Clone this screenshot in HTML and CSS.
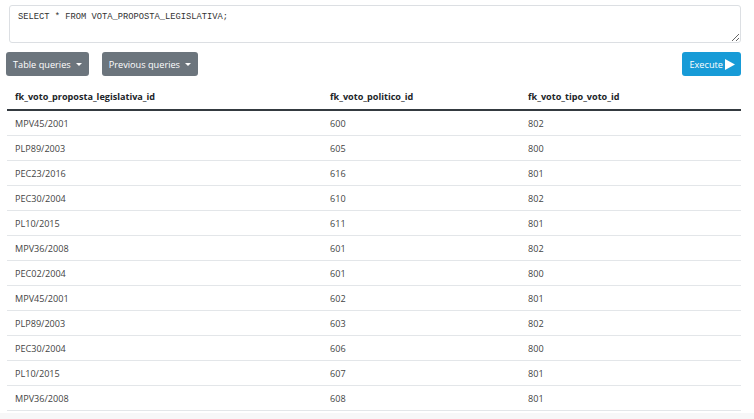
FILE: index.html
```html
<!DOCTYPE html>
<html>
<head>
<meta charset="utf-8">
<link rel="stylesheet" href="styles.css">
</head>
<body>
<div class="page">
  <textarea class="query">SELECT * FROM VOTA_PROPOSTA_LEGISLATIVA;</textarea>
  <div class="toolbar">
    <div class="left-btns">
      <button class="btn btn-gray">Table queries <span class="caret"></span></button>
      <button class="btn btn-gray">Previous queries <span class="caret"></span></button>
    </div>
    <button class="btn btn-blue">Execute <svg class="play" width="10" height="11" viewBox="0 0 10 11"><path d="M0 0 L10 5.5 L0 11 Z" fill="#fff"/></svg></button>
  </div>
  <table class="results">
    <thead>
      <tr><th class="c1">fk_voto_proposta_legislativa_id</th><th class="c2">fk_voto_politico_id</th><th class="c3">fk_voto_tipo_voto_id</th></tr>
    </thead>
    <tbody>
      <tr><td>MPV45/2001</td><td>600</td><td>802</td></tr>
      <tr><td>PLP89/2003</td><td>605</td><td>800</td></tr>
      <tr><td>PEC23/2016</td><td>616</td><td>801</td></tr>
      <tr><td>PEC30/2004</td><td>610</td><td>802</td></tr>
      <tr><td>PL10/2015</td><td>611</td><td>801</td></tr>
      <tr><td>MPV36/2008</td><td>601</td><td>802</td></tr>
      <tr><td>PEC02/2004</td><td>601</td><td>800</td></tr>
      <tr><td>MPV45/2001</td><td>602</td><td>801</td></tr>
      <tr><td>PLP89/2003</td><td>603</td><td>802</td></tr>
      <tr><td>PEC30/2004</td><td>606</td><td>800</td></tr>
      <tr><td>PL10/2015</td><td>607</td><td>801</td></tr>
      <tr><td>MPV36/2008</td><td>608</td><td>801</td></tr>
    </tbody>
  </table>
</div>
<div class="footer-strip"></div>
</body>
</html>
```
FILE: styles.css
```css
html, body {
  margin: 0;
  padding: 0;
  background: #fff;
  font-family: "Open Sans", "Noto Sans", sans-serif;
  color: #212529;
}
.page {
  padding: 5px 13px 0 6px;
}
.query {
  display: block;
  box-sizing: border-box;
  margin-left: 3px;
  width: 732px;
  height: 38px;
  border: 1px solid #dcdfe3;
  border-radius: 3px;
  padding: 6px 8px;
  font-family: "Liberation Mono", monospace;
  font-size: 8.75px;
  color: #333;
  resize: vertical;
}
.toolbar {
  display: flex;
  justify-content: space-between;
  align-items: center;
  margin-top: 9px;
}
.left-btns {
  display: flex;
  gap: 13px;
}
.btn {
  height: 24px;
  border: none;
  border-radius: 3px;
  color: #fff;
  font-family: "Open Sans", sans-serif;
  font-size: 9.2px;
  padding: 0 7px;
  display: flex;
  align-items: center;
  gap: 5px;
}
.btn-gray {
  background: #6c757d;
}
.btn-blue {
  background: #179bd7;
  gap: 2px;
  padding: 0 6px 0 7px;
}
.caret {
  width: 0;
  height: 0;
  border-left: 3px solid transparent;
  border-right: 3px solid transparent;
  border-top: 3px solid #fff;
}
.results {
  margin-top: 9px;
  margin-left: 1px;
  width: 734px;
  border-collapse: collapse;
  font-size: 9.1px;
}
.results th {
  text-align: left;
  font-weight: bold;
  padding: 5px 8px 6px;
  border-bottom: 2px solid #343a40;
  color: #212529;
}
.results td {
  padding: 0 8px;
  height: 24px;
  border-bottom: 1px solid #e3e6e9;
  color: #444;
}
.c1 { width: 299px; }
.c2 { width: 182px; }
.footer-strip {
  position: fixed;
  left: 0;
  right: 0;
  bottom: 0;
  height: 6px;
  background: #f7f7f8;
}
```
